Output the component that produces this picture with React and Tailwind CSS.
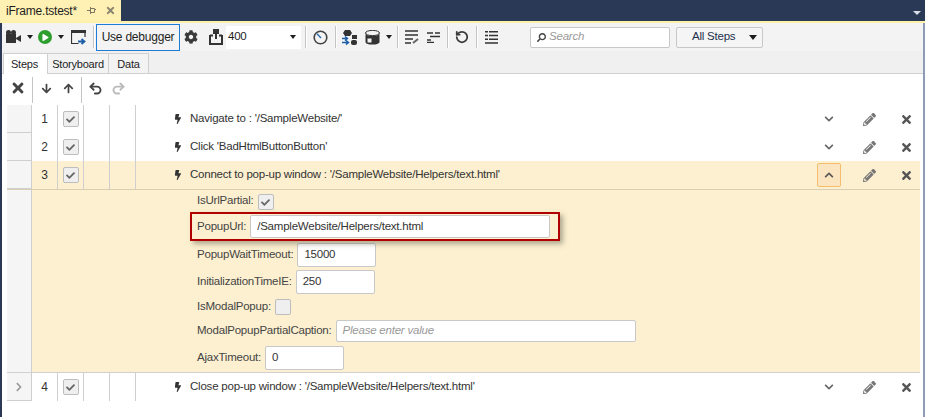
import { FaBolt, FaPencilAlt, FaTimes, FaCheck, FaChevronDown, FaChevronUp, FaChevronRight, FaCog, FaSearch, FaArrowDown, FaArrowUp, FaPlay } from "react-icons/fa";
import { RotateCw, Undo2, Redo2 } from "lucide-react";

const steps = [
  { n: 1, text: "Navigate to : '/SampleWebsite/'", h: "h-[28px]" },
  { n: 2, text: "Click 'BadHtmlButtonButton'", h: "h-[28px]" },
  { n: 3, text: "Connect to pop-up window : '/SampleWebsite/Helpers/text.html'", open: true, h: "h-[29px]" },
];

function Caret({ className = "" }) {
  return <div className={`w-0 h-0 border-x-[3.5px] border-x-transparent border-t-[4px] border-t-[#1e1e1e] ${className}`} />;
}

function Sep({ className = "" }) {
  return <div className={`w-px h-[22px] bg-[#c4c4c4] border-r border-white box-content shrink-0 ${className}`} />;
}

function CheckBox({ checked = true, className = "" }) {
  return (
    <div className={`w-[16px] h-[16px] rounded-[2px] border border-[#bdbdbd] bg-[#efefef] flex items-center justify-center shrink-0 ${className}`}>
      {checked && <FaCheck className="text-[#666] text-[9px]" />}
    </div>
  );
}

function PinIcon() {
  return (
    <svg width="9" height="9" viewBox="0 0 9 9" className="ml-[10px]">
      <path d="M0 4.5h3M3.5 2.5h4v4h-4zM3.5 1v7M7 3.5h2" fill="none" stroke="#7a7660" strokeWidth="1" />
    </svg>
  );
}

function CameraIcon() {
  return (
    <svg width="15" height="14" viewBox="0 0 15 14">
      <circle cx="2.5" cy="2.5" r="2.5" fill="#333" />
      <circle cx="7.5" cy="2.5" r="2.5" fill="#333" />
      <rect x="0" y="4" width="10" height="9" fill="#333" />
      <path d="M10 8l5-3v7l-5-3z" fill="#333" />
    </svg>
  );
}

function WindowIcon() {
  return (
    <svg width="15" height="15" viewBox="0 0 15 15" className="ml-[7px]">
      <path d="M0.5 1v12.5h7M14 1v6" fill="none" stroke="#333" strokeWidth="1.2" />
      <rect x="0" y="0" width="15" height="3" fill="#333" />
      <path d="M7 11.5h6M10.5 9l3 2.5-3 2.5" fill="none" stroke="#1f5fa8" strokeWidth="1.8" />
    </svg>
  );
}

function UploadIcon() {
  return (
    <svg width="14" height="16" viewBox="0 0 14 16" className="ml-[11px]">
      <rect x="4" y="0" width="6" height="5" fill="#333" />
      <rect x="6" y="4" width="2" height="6" fill="#333" />
      <path d="M1 6.5h3M10 6.5h3M1 6v9h12V6" fill="none" stroke="#333" strokeWidth="2" />
    </svg>
  );
}

function ClockIcon() {
  return (
    <svg width="15" height="15" viewBox="0 0 15 15" className="ml-[6px]">
      <circle cx="7.5" cy="7.5" r="6.3" fill="#f3f3f3" stroke="#444" strokeWidth="1.6" />
      <path d="M4 3.8 8 8" stroke="#2a6db0" strokeWidth="1.4" />
    </svg>
  );
}

function FlowIcon() {
  return (
    <svg width="15" height="15" viewBox="0 0 15 15" className="ml-[5px]">
      <path d="M3 0h5l2 3-2 3H3L1 3z" fill="#333" />
      <rect x="10" y="5" width="5" height="4" fill="#333" />
      <rect x="9" y="10" width="6" height="5" rx="2" fill="#333" />
      <path d="M0 8.5h5M3 6.5l2.5 2-2.5 2M0 12.5h6M4 10.5l2.5 2-2.5 2" fill="none" stroke="#1f5fa8" strokeWidth="1.5" />
    </svg>
  );
}

function DbIcon() {
  return (
    <svg width="15" height="15" viewBox="0 0 15 15" className="ml-[8px]">
      <ellipse cx="7.5" cy="3" rx="7" ry="2.6" fill="#f3f3f3" stroke="#333" strokeWidth="1" />
      <path d="M0.5 4v8c0 1.5 3 2.6 7 2.6s7-1.1 7-2.6V4c-1 1.3-3.5 2-7 2s-6-0.7-7-2z" fill="#333" />
      <rect x="2" y="8" width="5" height="5" fill="#f3f3f3" stroke="#333" strokeWidth="1" />
    </svg>
  );
}

function LinesPen() {
  return (
    <svg width="14" height="15" viewBox="0 0 14 15" className="ml-[6px]">
      <path d="M0 1h13M0 5h13M0 9h8M0 13h6" stroke="#333" strokeWidth="1.6" />
      <path d="M8 13l5-4" stroke="#666" strokeWidth="2" />
    </svg>
  );
}

function LinesIndent() {
  return (
    <svg width="13" height="11" viewBox="0 0 13 11" className="ml-[8px]">
      <path d="M0 1h6M8 1h5M3 4.5h10M0 8h4M0 10.5h7" stroke="#333" strokeWidth="1.6" />
    </svg>
  );
}

function ListIcon() {
  return (
    <svg width="13" height="13" viewBox="0 0 13 13" className="ml-[7px]">
      <path d="M0 0.8h3M4 0.8h9M0 4.5h3M4 4.5h9M0 8.2h3M4 8.2h9M0 12h13" stroke="#333" strokeWidth="1.6" />
    </svg>
  );
}

function Toolbar() {
  return (
    <div className="h-[28px] bg-[#f3f3f3] flex items-center pl-[4px] text-[#1e1e1e]">
      <CameraIcon />
      <Caret className="ml-[6px]" />
      <div className="ml-[5px] w-[14px] h-[14px] rounded-full bg-[#2e9e2e] flex items-center justify-center">
        <FaPlay className="text-white text-[7px] ml-px" />
      </div>
      <Caret className="ml-[6px]" />
      <WindowIcon />
      <Sep className="ml-[7px]" />
      <div className="ml-[1px] w-[84px] h-[27px] shrink-0 border border-[#1c7cd6] flex items-center justify-center text-[12px] whitespace-nowrap">Use debugger</div>
      <FaCog className="ml-[4px] text-[#3a3a3a] text-[14px]" />
      <UploadIcon />
      <div className="ml-[3px] w-[75px] h-[23px] bg-white flex items-center justify-between pl-[2px] pr-[5px]">
        <span>400</span>
        <Caret />
      </div>
      <Sep className="ml-[4px]" />
      <ClockIcon />
      <Sep className="ml-[7px]" />
      <FlowIcon />
      <DbIcon />
      <Caret className="ml-[6px]" />
      <Sep className="ml-[5px]" />
      <LinesPen />
      <LinesIndent />
      <Sep className="ml-[7px]" />
      <RotateCw size={14} strokeWidth={3} className="ml-[6px] text-[#3a3a3a] -scale-x-100" />
      <Sep className="ml-[7px]" />
      <ListIcon />
      <div className="ml-[32px] w-[140px] h-[21px] bg-white border border-[#c8c8c8] rounded-[2px] flex items-center pl-[6px] gap-[3px]">
        <FaSearch className="text-[#444] text-[9px] -scale-x-100" />
        <span className="italic text-[#999]">Search</span>
      </div>
      <div className="ml-[6px] w-[87px] h-[21px] bg-[#f5f5f5] border border-[#c8c8c8] rounded-[2px] flex items-center justify-between pl-[15px] pr-[5px] text-[#22304a]">
        <span>All Steps</span>
        <Caret className="border-x-[4px] border-t-[5px]" />
      </div>
    </div>
  );
}

function Tabs() {
  return (
    <div className="h-[23px] bg-[#f0f0f0] flex items-end border-b border-[#d0d0d0] text-[11px] text-[#1e1e1e] pl-[1px]">
      <div className="w-[45px] h-[21px] -mb-px bg-white border border-b-0 border-[#d0d0d0] pl-[7px] pt-[2px]">Steps</div>
      <div className="w-[61px] h-[20px] bg-[#f3f3f3] border-r border-t border-[#d0d0d0] text-center pt-[2px]">Storyboard</div>
      <div className="w-[40px] h-[20px] bg-[#f3f3f3] border-r border-t border-[#d0d0d0] text-center pt-[2px]">Data</div>
    </div>
  );
}

function ActionBar() {
  return (
    <div className="h-[31px] flex items-start pt-[3px] pl-[8px]">
      <FaTimes className="text-[#444] text-[16px] mt-[3px]" />
      <div className="w-px h-[26px] bg-[#c4c4c4] ml-[6px]" />
      <FaArrowDown className="text-[#444] text-[11px] ml-[8px] mt-[6px]" />
      <FaArrowUp className="text-[#444] text-[11px] ml-[11px] mt-[6px]" />
      <div className="w-px h-[26px] bg-[#c4c4c4] ml-[7px]" />
      <Undo2 size={15} strokeWidth={3} className="text-[#444] ml-[6px] mt-[4px]" />
      <Redo2 size={15} strokeWidth={3} className="text-[#bbb] ml-[8px] mt-[4px]" />
    </div>
  );
}

function StepRow({ n, text, open, gutter, h = "h-[28px]" }) {
  return (
    <div className={`${h} flex items-center ${open ? "bg-[#fdf0d0] border-b border-[#d9cfb5]" : "bg-white"}`}>
      <div className="w-[25px] h-full bg-[#f5f5f5] border-r border-b border-[#cfcfcf] flex items-center justify-center shrink-0">
        {gutter && <FaChevronRight className="text-[#999] text-[10px]" />}
      </div>
      <div className="w-[26px] h-full border-r border-[#cfcfcf] flex items-center justify-center text-[12px] text-[#333] shrink-0">{n}</div>
      <div className="w-[26px] h-full border-r border-[#cfcfcf] flex items-center justify-center shrink-0"><CheckBox /></div>
      <div className="w-[26px] h-full border-r border-[#cfcfcf] shrink-0" />
      <div className="w-[26px] h-full border-r border-[#cfcfcf] shrink-0" />
      <FaBolt className="ml-[37px] text-[#333] text-[10px] shrink-0" />
      <div className="ml-[7px] text-[#333] flex-1 whitespace-nowrap">{text}</div>
      <div className={`w-[24px] h-[24px] flex items-center justify-center rounded-[2px] ${open ? "bg-[#fbe4c0] border border-[#f5bd6b]" : ""}`}>
        {open ? <FaChevronUp className="text-[#555] text-[10px]" /> : <FaChevronDown className="text-[#666] text-[10px]" />}
      </div>
      <FaPencilAlt className="ml-[22px] text-[#777] text-[13px]" />
      <FaTimes className="ml-[24px] mr-[7px] text-[#555] text-[13px]" />
    </div>
  );
}

function Field({ label, h, children }) {
  return (
    <div className={`flex items-center gap-[4px] ${h}`}>
      <span>{label}:</span>
      {children}
    </div>
  );
}

function Input({ w, value, placeholder }) {
  return (
    <div className={`${w} bg-white border border-[#c8c8c8] rounded-[2px] flex items-center pl-[6px] shrink-0`}>
      {value ? <span className="text-[#333]">{value}</span> : <span className="italic text-[#999]">{placeholder}</span>}
    </div>
  );
}

function Details() {
  return (
    <div className="flex h-[183px] border-b border-[#d0d0d0]">
      <div className="w-[25px] bg-[#f5f5f5] border-r border-[#cfcfcf] shrink-0" />
      <div className="flex-1 bg-[#fdf0d0] pl-[165px] text-[#444] flex flex-col">
        <Field label="IsUrlPartial" h="h-[22px]"><CheckBox className="mt-[2px]" /></Field>
        <div className="relative h-[30px]">
          <div className="absolute left-[-7px] top-0 w-[370px] h-[29px] border-2 border-[#b00000] shadow-[3px_3px_5px_rgba(100,100,80,0.5)]" />
          <Field label="PopupUrl" h="relative h-[29px]">
            <Input w="w-[300px] h-[23px]" value="/SampleWebsite/Helpers/text.html" />
          </Field>
        </div>
        <Field label="PopupWaitTimeout" h="h-[26px]"><Input w="w-[79px] h-[24px]" value="15000" /></Field>
        <Field label="InitializationTimeIE" h="h-[28px]"><Input w="w-[79px] h-[24px]" value="250" /></Field>
        <Field label="IsModalPopup" h="h-[22px]"><CheckBox checked={false} /></Field>
        <Field label="ModalPopupPartialCaption" h="h-[26px]"><Input w="w-[300px] h-[22px]" placeholder="Please enter value" /></Field>
        <Field label="AjaxTimeout" h="h-[28px]"><Input w="w-[79px] h-[24px]" value="0" /></Field>
      </div>
    </div>
  );
}

export default function App() {
  return (
    <div className="w-[925px] h-[417px] overflow-hidden flex flex-col bg-white font-['Liberation_Sans',Arial,sans-serif] text-[11.5px] tracking-[-0.22px]">
      <div className="h-[21px] bg-[#2a3a56] flex items-stretch shrink-0">
        <div className="w-[121px] bg-[#fff1b3] flex items-center pl-[6px] text-[12px] text-[#1e1e1e]">
          <span>iFrame.tstest*</span>
          <PinIcon />
          <FaTimes className="ml-[9px] text-[#8a8570] text-[11px]" />
        </div>
        <div className="flex-1 flex items-center justify-end pr-[4px]">
          <div className="w-0 h-0 border-x-[4px] border-x-transparent border-t-[4px] border-t-[#d8dde6] mt-[5px]" />
        </div>
      </div>
      <div className="h-[2px] bg-[#fff1a8] shrink-0" />
      <div className="flex-1 flex flex-col border-l-2 border-l-[#2a3a56] border-r-2 border-r-[#8f9bb5]">
        <Toolbar />
        <Tabs />
        <ActionBar />
        <div className="flex-1 pr-[3px] pl-[5px]">
          {steps.map((s) => <StepRow key={s.n} {...s} />)}
          <Details />
          <StepRow n={4} text="Close pop-up window : '/SampleWebsite/Helpers/text.html'" gutter />
        </div>
      </div>
    </div>
  );
}
